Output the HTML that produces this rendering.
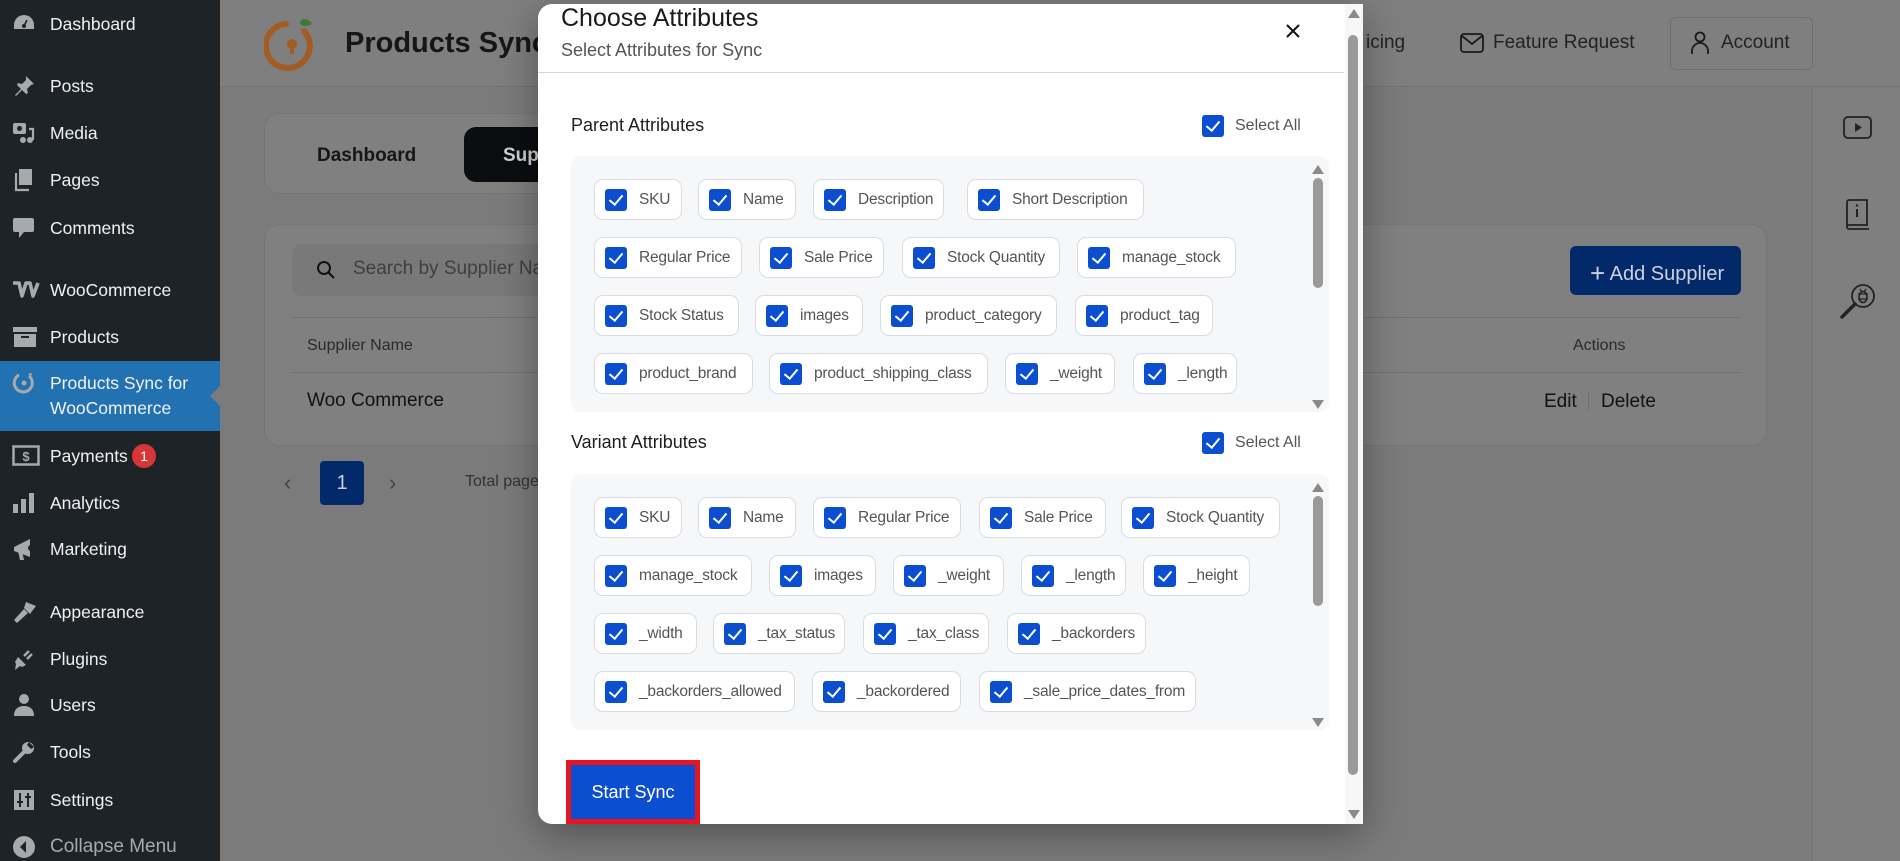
<!DOCTYPE html>
<html><head><meta charset="utf-8">
<style>
*{box-sizing:border-box;margin:0;padding:0}
body{width:1900px;height:861px;overflow:hidden;position:relative;background:#7b7b7b;font-family:"Liberation Sans",Arial,sans-serif}
.abs{position:absolute}
#side{left:0;top:0;width:220px;height:861px;background:#1d2327}
.mi{position:absolute;left:0;width:220px;color:#f0f0f1;font-size:17.5px;line-height:20px}
.mi .t{position:absolute;left:50px;top:0;white-space:nowrap}
.mi svg{position:absolute;left:12px;top:-2px}
#hdr{left:220px;top:0;width:1680px;height:87px;background:#7f7f7f;border-bottom:1px solid #737373}
#rp{left:1812px;top:87px;width:88px;height:774px;background:#7f7f7f;border-left:1px solid #737373}
.card{background:#808080;border:1px solid #767676;border-radius:16px}
.dk{color:#161616}
#modal{left:538px;top:4px;width:825px;height:820px;background:#fff;border-radius:14px 0 0 14px;box-shadow:0 10px 40px rgba(0,0,0,.35);overflow:hidden}
.sec{position:absolute;left:33px;font-size:18px;color:#1f1f1f}
.sa{position:absolute;font-size:16px;color:#555}
.box{position:absolute;left:33px;width:758px;height:256px;background:#f6f7f9;border-radius:10px;overflow:hidden}
.chip{position:absolute;height:41px;background:#fff;border:1px solid #d9dce1;border-radius:9px;display:flex;align-items:center;padding:0 0 0 10px;font-size:15.5px;letter-spacing:-0.2px;color:#555;white-space:nowrap;overflow:hidden}
.r1{top:23px}.r2{top:81px}.r3{top:139px}.r4{top:197px}
.cb{width:22px;height:22px;background:#0b4fd0;border-radius:3px;display:inline-block;position:relative;flex:none;margin-right:12px}
.cb:after{content:"";position:absolute;left:7px;top:3px;width:6px;height:11px;border:solid #fff;border-width:0 2px 2px 0;transform:rotate(40deg)}
.sb{position:absolute;width:10px;background:#9a9a9a;border-radius:5px}
.ar{position:absolute;width:0;height:0;border-left:6px solid transparent;border-right:6px solid transparent}
.up{border-bottom:9px solid #8a8a8a}.dn{border-top:9px solid #8a8a8a}
</style></head><body>

<div id="side" class="abs">
 <div class="mi" style="top:14px"><svg width="24" height="22" viewBox="0 0 24 22"><path d="M12 3a10 10 0 0 0-10 10v4h20v-4A10 10 0 0 0 12 3z" fill="#a7aaad"/><circle cx="12" cy="14" r="2" fill="#1d2327"/><path d="M12 14l3-6" stroke="#1d2327" stroke-width="1.6"/></svg><span class="t">Dashboard</span></div>
 <div class="mi" style="top:76px"><svg width="24" height="24" viewBox="0 0 24 24"><path d="M14 2l8 8-3 1-4 4 1 4-2 1-4-4-6 6-1-1 6-6-4-4 1-2 4 1 4-4z" fill="#a7aaad"/></svg><span class="t">Posts</span></div>
 <div class="mi" style="top:123px"><svg width="24" height="24" viewBox="0 0 24 24"><rect x="1" y="2" width="13" height="11" rx="2" fill="#a7aaad"/><circle cx="7.5" cy="7.5" r="2.5" fill="#1d2327"/><path d="M17 8h4v11" stroke="#a7aaad" stroke-width="2.2" fill="none"/><circle cx="18" cy="19" r="3" fill="#a7aaad"/><circle cx="11" cy="19" r="3" fill="#a7aaad"/></svg><span class="t">Media</span></div>
 <div class="mi" style="top:170px"><svg width="24" height="24" viewBox="0 0 24 24"><rect x="7" y="1" width="13" height="16" fill="#a7aaad"/><path d="M4 5v17h13" stroke="#a7aaad" stroke-width="2.2" fill="none"/></svg><span class="t">Pages</span></div>
 <div class="mi" style="top:218px"><svg width="24" height="24" viewBox="0 0 24 24"><path d="M3 2h17a2 2 0 0 1 2 2v10a2 2 0 0 1-2 2H12l-5 6v-6H3a2 2 0 0 1-2-2V4a2 2 0 0 1 2-2z" fill="#a7aaad"/></svg><span class="t">Comments</span></div>
 <div class="mi" style="top:280px"><svg width="28" height="22" viewBox="0 0 28 22"><path d="M1 5h6l3 13 4-13h4l3 13 5-13" stroke="#a7aaad" stroke-width="3.6" fill="none" stroke-linejoin="round"/></svg><span class="t">WooCommerce</span></div>
 <div class="mi" style="top:327px"><svg width="26" height="24" viewBox="0 0 26 24"><rect x="1" y="2" width="24" height="5" fill="#a7aaad"/><rect x="2" y="9" width="22" height="13" fill="#a7aaad"/><rect x="9" y="11" width="8" height="2" fill="#1d2327"/></svg><span class="t">Products</span></div>
 <div class="abs" style="left:0;top:361px;width:220px;height:70px;background:#2271b1"></div>
 <div class="abs" style="left:210px;top:386px;width:0;height:0;border-top:10px solid transparent;border-bottom:10px solid transparent;border-right:10px solid #7b7b7b"></div>
 <div class="mi" style="top:373px"><svg width="24" height="24" viewBox="0 0 24 24"><path d="M17 5A9 9 0 1 1 7 4" stroke="#a7aaad" stroke-width="3" fill="none"/><circle cx="12" cy="12" r="2.5" fill="#a7aaad"/><path d="M16 3l4-1-1 4z" fill="#a7aaad"/></svg><span class="t">Products Sync for</span></div>
 <div class="mi" style="top:398px"><span class="t">WooCommerce</span></div>
 <div class="mi" style="top:446px"><svg width="28" height="24" viewBox="0 0 28 24"><rect x="1.5" y="2.5" width="25" height="18" fill="none" stroke="#a7aaad" stroke-width="2.5"/><text x="14" y="17" fill="#a7aaad" font-size="13" font-weight="bold" text-anchor="middle" font-family="Liberation Sans">$</text></svg><span class="t">Payments</span><span style="position:absolute;left:132px;top:-2px;width:24px;height:24px;border-radius:12px;background:#d63638;color:#fff;font-size:14px;text-align:center;line-height:24px">1</span></div>
 <div class="mi" style="top:493px"><svg width="24" height="24" viewBox="0 0 24 24"><rect x="1" y="13" width="5" height="9" fill="#a7aaad"/><rect x="9" y="8" width="5" height="14" fill="#a7aaad"/><rect x="17" y="2" width="5" height="20" fill="#a7aaad"/></svg><span class="t">Analytics</span></div>
 <div class="mi" style="top:539px"><svg width="26" height="26" viewBox="0 0 26 26"><path d="M2 10l16-8v18L2 14z" fill="#a7aaad"/><path d="M6 14l2 9h4l-2-9z" fill="#a7aaad"/><circle cx="19" cy="11" r="3" fill="#1d2327"/></svg><span class="t">Marketing</span></div>
 <div class="mi" style="top:602px"><svg width="26" height="24" viewBox="0 0 26 24"><path d="M14 2l10 4-6 8-6-6z" fill="#a7aaad"/><path d="M12 9l4 4-11 10-3-3z" fill="#a7aaad"/></svg><span class="t">Appearance</span></div>
 <div class="mi" style="top:649px"><svg width="24" height="24" viewBox="0 0 24 24"><path d="M6 10l8 8-4 2-2-1-5 4 1-6-1-2z" fill="#a7aaad"/><path d="M12 9l5-5M15 12l5-5" stroke="#a7aaad" stroke-width="2.5"/></svg><span class="t">Plugins</span></div>
 <div class="mi" style="top:695px"><svg width="24" height="24" viewBox="0 0 24 24"><circle cx="12" cy="6" r="5" fill="#a7aaad"/><path d="M2 23c0-7 4-10 10-10s10 3 10 10z" fill="#a7aaad"/></svg><span class="t">Users</span></div>
 <div class="mi" style="top:742px"><svg width="24" height="24" viewBox="0 0 24 24"><path d="M3 21l10-10" stroke="#a7aaad" stroke-width="4" stroke-linecap="round"/><circle cx="16" cy="8" r="6" fill="#a7aaad"/><path d="M17 2l5 5-3 2-4-4z" fill="#1d2327"/></svg><span class="t">Tools</span></div>
 <div class="mi" style="top:790px"><svg width="24" height="24" viewBox="0 0 24 24"><rect x="2" y="2" width="20" height="20" fill="#a7aaad"/><path d="M8 5v14M16 5v14M5 14h6M13 9h6" stroke="#1d2327" stroke-width="2"/></svg><span class="t">Settings</span></div>
 <div class="mi" style="top:837px;color:#a7aaad;font-size:19px"><svg width="24" height="24" viewBox="0 0 24 24"><circle cx="12" cy="12" r="11" fill="#a7aaad"/><path d="M14 6l-6 6 6 6z" fill="#1d2327"/></svg><span class="t">Collapse Menu</span></div>
</div>

<div id="hdr" class="abs"></div>
<svg class="abs" style="left:264px;top:15px" width="58" height="56" viewBox="0 0 58 56"><path d="M40 16A22 22 0 1 1 22 9" stroke="#a35c24" stroke-width="6" fill="none" stroke-linecap="round"/><circle cx="28" cy="29" r="5" fill="#a35c24"/><rect x="26" y="30" width="4" height="9" fill="#a35c24"/><path d="M39 4c5 0 8 3 9 5-5 3-10 2-12 0 0-2 1-4 3-5z" fill="#3e7a34"/></svg>
<div class="abs dk" style="left:345px;top:27px;font-size:29px;font-weight:bold">Products Sync</div>
<div class="abs" style="left:1366px;top:32px;font-size:19px;color:#222">icing</div>
<svg class="abs" style="left:1460px;top:33px" width="24" height="20" viewBox="0 0 24 20"><rect x="1" y="1" width="22" height="18" rx="3" fill="none" stroke="#1a1a1a" stroke-width="1.8"/><path d="M2 3l10 8 10-8" fill="none" stroke="#1a1a1a" stroke-width="1.8"/></svg>
<div class="abs" style="left:1493px;top:32px;font-size:19px;color:#222">Feature Request</div>
<div class="abs" style="left:1670px;top:17px;width:143px;height:53px;border:1.5px solid #6e6e6e;border-radius:6px"></div>
<svg class="abs" style="left:1690px;top:31px" width="20" height="24" viewBox="0 0 20 24"><circle cx="10" cy="6" r="4.5" fill="none" stroke="#1a1a1a" stroke-width="1.8"/><path d="M2 23v-3a8 8 0 0 1 16 0v3" fill="none" stroke="#1a1a1a" stroke-width="1.8"/></svg>
<div class="abs" style="left:1721px;top:32px;font-size:19px;color:#222">Account</div>

<div id="rp" class="abs"></div>
<svg class="abs" style="left:1843px;top:116px" width="30" height="24" viewBox="0 0 30 24"><rect x="1" y="1" width="27" height="21" rx="4" fill="none" stroke="#222" stroke-width="1.8"/><path d="M12 7l7 4.5-7 4.5z" fill="#222"/></svg>
<svg class="abs" style="left:1845px;top:199px" width="26" height="32" viewBox="0 0 26 32"><path d="M2 27V3a2 2 0 0 1 2-2h18v25H4a2 2 0 0 0 0 4h20" fill="none" stroke="#222" stroke-width="1.8"/><path d="M12 10v8" stroke="#222" stroke-width="2"/><circle cx="12" cy="6.5" r="1.2" fill="#222"/></svg>
<svg class="abs" style="left:1839px;top:282px" width="38" height="38" viewBox="0 0 38 38"><circle cx="24" cy="14" r="11" fill="none" stroke="#222" stroke-width="1.8"/><path d="M16 22L3 35" stroke="#222" stroke-width="3.5" stroke-linecap="round"/><ellipse cx="24" cy="15" rx="4" ry="5.5" fill="none" stroke="#222" stroke-width="1.6"/><path d="M19 12h10M19 17h10M21 7l2 3M27 7l-2 3" stroke="#222" stroke-width="1.3"/></svg>

<div class="abs card" style="left:264px;top:113px;width:400px;height:81px"></div>
<div class="abs dk" style="left:317px;top:145px;font-size:19px;font-weight:bold">Dashboard</div>
<div class="abs" style="left:464px;top:127px;width:200px;height:55px;background:#0b0d10;border-radius:12px"></div>
<div class="abs" style="left:503px;top:145px;font-size:19px;font-weight:bold;color:#cfcfcf">Suppliers</div>

<div class="abs card" style="left:264px;top:224px;width:1503px;height:222px"></div>
<div class="abs" style="left:292px;top:244px;width:300px;height:52px;background:#797979;border-radius:10px"></div>
<svg class="abs" style="left:316px;top:260px" width="20" height="20" viewBox="0 0 20 20"><circle cx="8" cy="8" r="6" fill="none" stroke="#111" stroke-width="2"/><path d="M12.5 12.5L18 18" stroke="#111" stroke-width="2"/></svg>
<div class="abs" style="left:353px;top:258px;font-size:19px;color:#3f3f3f">Search by Supplier Name</div>
<div class="abs" style="left:1570px;top:246px;width:171px;height:49px;background:#022a6b;border-radius:6px"></div>
<div class="abs" style="left:1590px;top:256px;font-size:20px;color:#ccd1da"><span style="font-size:26px;position:relative;top:2px">+</span> Add Supplier</div>
<div class="abs" style="left:291px;top:317px;width:1450px;height:1px;background:#707070"></div>
<div class="abs" style="left:307px;top:337px;font-size:16px;color:#2a2a2a">Supplier Name</div>
<div class="abs" style="left:1573px;top:337px;font-size:16px;color:#2a2a2a">Actions</div>
<div class="abs" style="left:291px;top:372px;width:1450px;height:1px;background:#707070"></div>
<div class="abs" style="left:307px;top:390px;font-size:19px;color:#111">Woo Commerce</div>
<div class="abs" style="left:1544px;top:391px;font-size:19px;color:#111">Edit</div>
<div class="abs" style="left:1588px;top:392px;width:1px;height:18px;background:#707070"></div>
<div class="abs" style="left:1601px;top:391px;font-size:19px;color:#111">Delete</div>
<div class="abs" style="left:284px;top:470px;font-size:22px;color:#444">&#8249;</div>
<div class="abs" style="left:320px;top:461px;width:44px;height:44px;background:#022a6b;border-radius:4px;color:#c9ced8;font-size:20px;text-align:center;line-height:44px">1</div>
<div class="abs" style="left:389px;top:470px;font-size:22px;color:#444">&#8250;</div>
<div class="abs" style="left:465px;top:473px;font-size:16px;color:#333">Total pages</div>

<div id="modal" class="abs">
 <div class="abs" style="left:23px;top:0px;font-size:25px;color:#1a1a1a">Choose Attributes</div>
 <div class="abs" style="left:23px;top:36px;font-size:18px;color:#555">Select Attributes for Sync</div>
 <svg class="abs" style="left:747px;top:19px" width="16" height="16" viewBox="0 0 16 16"><path d="M2 2l12 12M14 2L2 14" stroke="#111" stroke-width="2"/></svg>
 <div class="abs" style="left:0;top:68px;width:806px;height:1px;background:#d6d6d6"></div>
 <div class="abs" style="left:807px;top:0;width:18px;height:820px;background:#f7f7f7"></div>
 <div class="ar up" style="left:810px;top:5px"></div>
 <div class="sb" style="left:810px;top:31px;height:740px"></div>
 <div class="ar dn" style="left:810px;top:806px"></div>

 <div class="sec" style="top:111px">Parent Attributes</div>
 <span class="cb" style="position:absolute;left:664px;top:111px"></span><div class="sa" style="left:697px;top:113px">Select All</div>
 <div class="box" style="top:152px">
  <div class="chip r1" style="left:23px;width:88px"><span class="cb"></span>SKU</div>
  <div class="chip r1" style="left:127px;width:98px"><span class="cb"></span>Name</div>
  <div class="chip r1" style="left:242px;width:131px"><span class="cb"></span>Description</div>
  <div class="chip r1" style="left:396px;width:177px"><span class="cb"></span>Short Description</div>
  <div class="chip r2" style="left:23px;width:148px"><span class="cb"></span>Regular Price</div>
  <div class="chip r2" style="left:188px;width:125px"><span class="cb"></span>Sale Price</div>
  <div class="chip r2" style="left:331px;width:158px"><span class="cb"></span>Stock Quantity</div>
  <div class="chip r2" style="left:506px;width:159px"><span class="cb"></span>manage_stock</div>
  <div class="chip r3" style="left:23px;width:145px"><span class="cb"></span>Stock Status</div>
  <div class="chip r3" style="left:184px;width:108px"><span class="cb"></span>images</div>
  <div class="chip r3" style="left:309px;width:177px"><span class="cb"></span>product_category</div>
  <div class="chip r3" style="left:504px;width:138px"><span class="cb"></span>product_tag</div>
  <div class="chip r4" style="left:23px;width:159px"><span class="cb"></span>product_brand</div>
  <div class="chip r4" style="left:198px;width:219px"><span class="cb"></span>product_shipping_class</div>
  <div class="chip r4" style="left:434px;width:110px"><span class="cb"></span>_weight</div>
  <div class="chip r4" style="left:562px;width:104px"><span class="cb"></span>_length</div>
 </div>
 <div class="ar up" style="left:774px;top:161px"></div>
 <div class="sb" style="left:775px;top:174px;height:110px"></div>
 <div class="ar dn" style="left:774px;top:396px"></div>

 <div class="sec" style="top:428px">Variant Attributes</div>
 <span class="cb" style="position:absolute;left:664px;top:428px"></span><div class="sa" style="left:697px;top:430px">Select All</div>
 <div class="box" style="top:470px">
  <div class="chip r1" style="left:23px;width:88px"><span class="cb"></span>SKU</div>
  <div class="chip r1" style="left:127px;width:98px"><span class="cb"></span>Name</div>
  <div class="chip r1" style="left:242px;width:148px"><span class="cb"></span>Regular Price</div>
  <div class="chip r1" style="left:408px;width:127px"><span class="cb"></span>Sale Price</div>
  <div class="chip r1" style="left:550px;width:159px"><span class="cb"></span>Stock Quantity</div>
  <div class="chip r2" style="left:23px;width:158px"><span class="cb"></span>manage_stock</div>
  <div class="chip r2" style="left:198px;width:107px"><span class="cb"></span>images</div>
  <div class="chip r2" style="left:322px;width:111px"><span class="cb"></span>_weight</div>
  <div class="chip r2" style="left:450px;width:105px"><span class="cb"></span>_length</div>
  <div class="chip r2" style="left:572px;width:107px"><span class="cb"></span>_height</div>
  <div class="chip r3" style="left:23px;width:103px"><span class="cb"></span>_width</div>
  <div class="chip r3" style="left:142px;width:132px"><span class="cb"></span>_tax_status</div>
  <div class="chip r3" style="left:292px;width:126px"><span class="cb"></span>_tax_class</div>
  <div class="chip r3" style="left:436px;width:139px"><span class="cb"></span>_backorders</div>
  <div class="chip r4" style="left:23px;width:201px"><span class="cb"></span>_backorders_allowed</div>
  <div class="chip r4" style="left:241px;width:149px"><span class="cb"></span>_backordered</div>
  <div class="chip r4" style="left:408px;width:217px"><span class="cb"></span>_sale_price_dates_from</div>
 </div>
 <div class="ar up" style="left:774px;top:479px"></div>
 <div class="sb" style="left:775px;top:492px;height:110px"></div>
 <div class="ar dn" style="left:774px;top:714px"></div>

 <div class="abs" style="left:28px;top:756px;width:134px;height:64px;background:#e8141e"></div>
 <div class="abs" style="left:33px;top:761px;width:124px;height:54px;background:#0b4fd0;color:#fff;font-size:18px;text-align:center;line-height:54px">Start Sync</div>
</div>
</body></html>
